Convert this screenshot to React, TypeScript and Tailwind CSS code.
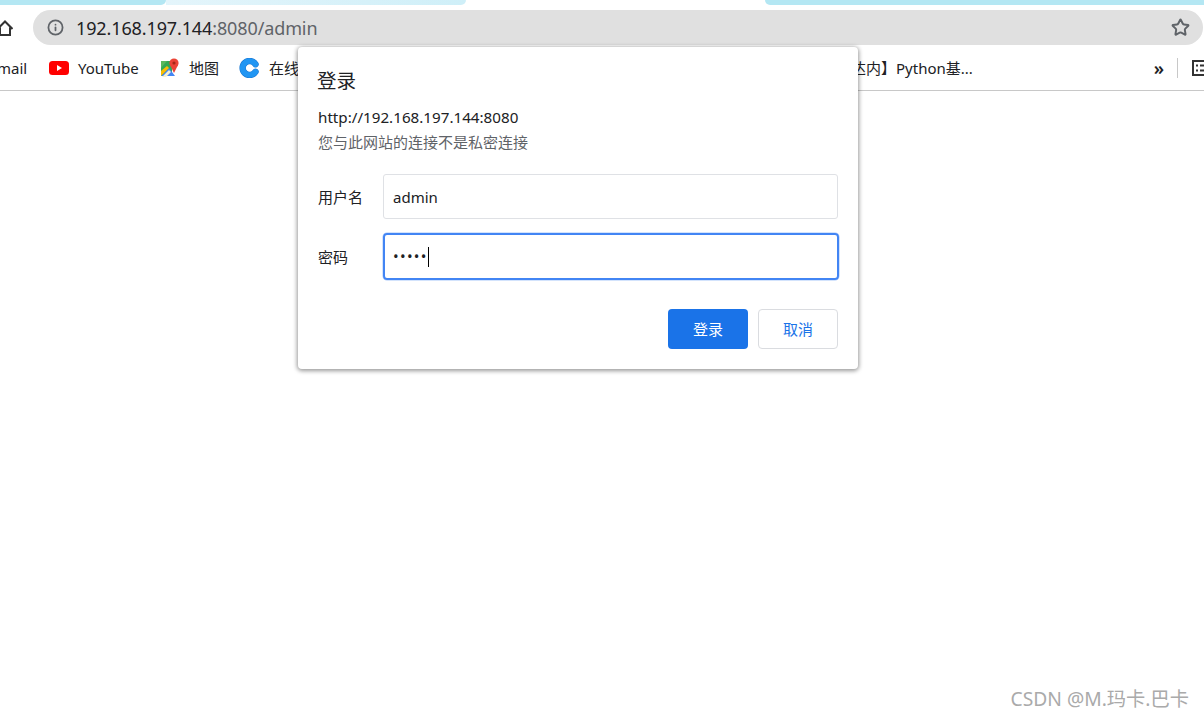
import { Info, Star } from 'lucide-react'

function YoutubeIcon() {
  return (
    <svg width="20" height="14" viewBox="0 0 20 14" className="shrink-0">
      <rect width="20" height="14" rx="3.5" fill="#ff0000" />
      <path d="M8 4l5 3-5 3z" fill="#fff" />
    </svg>
  )
}

function MapsIcon() {
  return (
    <svg width="19" height="20" viewBox="0 0 19 20" className="shrink-0">
      <path d="M1 3h11v15H1z" fill="#34a853" />
      <path d="M1 3h6l-6 7z" fill="#5cb85c" />
      <path d="M1 18l8-8 6 8z" fill="#4285f4" />
      <path d="M1 18V13l6-5 2 2z" fill="#fbbc04" />
      <path d="M2 19l7-7 2 2-5 5z" fill="#f5f0d0" />
      <circle cx="14" cy="5" r="4.600" fill="#ea4335" />
      <path d="M10 7l4 8 4-8z" fill="#ea4335" />
      <circle cx="14" cy="5" r="1.600" fill="#a52714" />
    </svg>
  )
}

function CIcon() {
  return (
    <svg width="21" height="20" viewBox="0 0 21 20" className="shrink-0" fill="none" strokeLinecap="round">
      <path d="M16.500 6.200A7 7 0 1 0 16.500 13.800" stroke="#1976d2" strokeWidth="6.400" />
      <path d="M16.500 6.200A7 7 0 1 0 16.500 13.800" stroke="#2196f3" strokeWidth="5.400" />
    </svg>
  )
}

export default function App() {
  return (
    <div className="relative h-[718px] w-[1204px] overflow-hidden bg-white text-[15px] text-[#202124] [font-family:'Noto_Sans','Noto_Sans_CJK_SC',sans-serif]">
      {/* tab strip */}
      <div className="flex h-[5px]">
        <div className="w-[166px] rounded-br-md bg-[#b4e7f3]" />
        <div className="w-[300px] rounded-br-md bg-gradient-to-r from-[#e4f5fb] to-[#cfeff8]" />
        <div className="w-[299px]" />
        <div className="flex-1 rounded-bl-md bg-[#b4e7f3]" />
      </div>

      {/* address row */}
      <div className="mt-[5px] flex h-[35px] items-center pr-px">
        <div className="w-[33px] shrink-0 overflow-hidden">
          <svg width="16" height="16" viewBox="0 0 16 16" className="-ml-[3px]" fill="none" stroke="#333" strokeWidth="2">
            <path d="M0.500 9L8 1.500l7.500 7.500M3 7.500V15h10V7.500" />
          </svg>
        </div>
        <div className="flex h-[35px] flex-1 items-center rounded-full bg-[#e0e0e0] pl-[14px] pr-[13px]">
          <Info size={17} color="#5f6368" strokeWidth={2.500} className="shrink-0" />
          <div className="ml-[12px] flex-1 text-[18px] leading-none tracking-[-0.12px]">
            <span>192.168.197.144</span>
            <span className="text-[#5f6368]">:8080/admin</span>
          </div>
          <Star size={19} color="#5f6368" strokeWidth={2.500} />
        </div>
      </div>

      {/* bookmarks */}
      <div className="flex h-[46px] items-center overflow-hidden whitespace-nowrap border-b border-[#c8c8c8] pt-px">
        <span className="-ml-[3px] w-[52px]">mail</span>
        <YoutubeIcon />
        <span className="ml-[9px] w-[61px]">YouTube</span>
        <span className="ml-[21px] flex items-center">
          <MapsIcon />
        </span>
        <span className="ml-[10px] w-[30px]">地图</span>
        <span className="ml-[20px] flex items-center"><CIcon /></span>
        <span className="ml-[9px] w-[567px]">在线工具</span>
        <span>【达内】Python基...</span>
        <span className="ml-auto text-[18px] font-semibold leading-none">»</span>
        <div className="ml-[13px] h-5 w-px bg-[#c8c8c8]" />
        <svg width="18" height="18" viewBox="0 0 18 18" className="-mr-[6px] ml-[14px] shrink-0" fill="none" stroke="#333" strokeWidth="2">
          <rect x="1" y="2" width="16" height="14" />
          <path d="M4 6.500h2M4 11.500h2M8 6.500h7M8 11.500h7" />
        </svg>
      </div>

      {/* auth dialog */}
      <div className="absolute left-[298px] top-[47px] h-[322px] w-[560px] rounded-[4px] bg-white px-5 pt-5 shadow-[0_1px_4px_1px_rgba(0,0,0,0.4)]">
        <div className="-ml-px text-[19.500px] leading-[28px]">登录</div>
        <div className="mt-[11px] text-[15.200px] leading-[22px]">http://192.168.197.144:8080</div>
        <div className="mt-[3px] text-[15px] leading-[22px] text-[#5f6368]">您与此网站的连接不是私密连接</div>

        <div className="mt-[21px] flex h-[45px] items-center">
          <div className="w-[65px] pt-px">用户名</div>
          <div className="flex h-[45px] flex-1 items-center rounded-[3px] border border-[#dfe1e5] pl-[9px] pt-px">admin</div>
        </div>
        <div className="mt-[14px] flex h-[47px] items-center">
          <div className="w-[65px] pt-px">密码</div>
          <div className="-mr-px flex h-[47px] flex-1 items-center rounded-[4px] border-2 border-[#4285f4] pl-[8px] shadow-[0_0_0_0.5px_#a8c7fa]">
            <span className="text-[15px] leading-none tracking-[1.300px]">•••••</span>
            <div className="h-5 w-px bg-black" />
          </div>
        </div>
        <div className="mt-[29px] flex justify-end gap-[10px]">
          <button type="button" className="h-10 w-20 rounded-[4px] bg-[#1a73e8] text-[15px] text-white">登录</button>
          <button type="button" className="h-10 w-20 rounded-[4px] border border-[#dadce0] bg-white text-[15px] text-[#1a73e8]">取消</button>
        </div>
      </div>

      <div className="absolute bottom-[6px] right-[15px] text-[19.250px] leading-[26px] text-[#aaaaaa]">CSDN @M.玛卡.巴卡</div>
    </div>
  )
}
